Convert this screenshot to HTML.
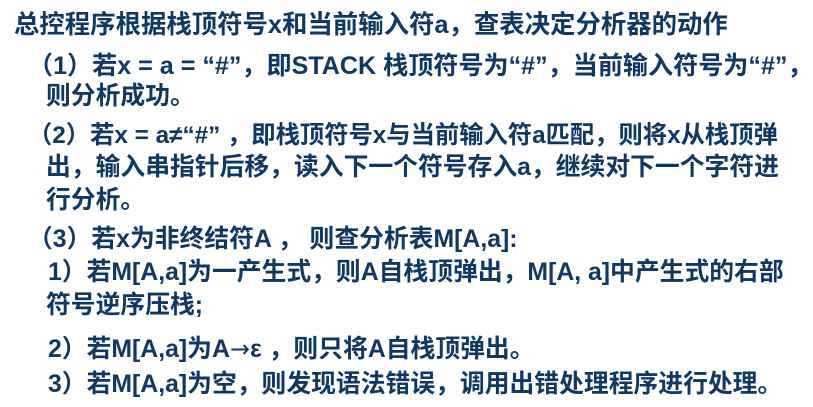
<!DOCTYPE html>
<html><head><meta charset="utf-8"><style>
body{margin:0;width:813px;height:407px;background:#fff;overflow:hidden;position:relative}
div{position:absolute;white-space:nowrap;font-family:"Liberation Sans","Noto Sans CJK SC",sans-serif;font-weight:bold;color:#0e3866;font-size:24.8px;line-height:28px}
.ar{font-family:"DejaVu Sans",sans-serif;font-weight:normal;font-size:24px}
</style></head><body>
<div style="left:14px;top:11px;font-size:25.4px">总控程序根据栈顶符号x和当前输入符a，查表决定分析器的动作</div>
<div style="left:28px;top:52px;font-size:25.1px">（1）若x = a = “#”，即STACK 栈顶符号为“#”，当前输入符号为“#”，</div>
<div style="left:46px;top:83px">则分析成功。</div>
<div style="left:28px;top:122px;font-size:24.3px">（2）若x = a≠“#” ，即栈顶符号x与当前输入符a匹配，则将x从栈顶弹</div>
<div style="left:46px;top:154px">出，输入串指针后移，读入下一个符号存入a，继续对下一个字符进</div>
<div style="left:46px;top:187px">行分析。</div>
<div style="left:28px;top:226px">（3）若x为非终结符A ， 则查分析表M[A,a]:</div>
<div style="left:48px;top:259px">1）若M[A,a]为一产生式，则A自栈顶弹出，M[A, a]中产生式的右部</div>
<div style="left:46px;top:292px">符号逆序压栈;</div>
<div style="left:48px;top:335px">2）若M[A,a]为A<span class="ar">→</span>ε ，则只将A自栈顶弹出。</div>
<div style="left:48px;top:371px">3）若M[A,a]为空，则发现语法错误，调用出错处理程序进行处理。</div>
</body></html>
